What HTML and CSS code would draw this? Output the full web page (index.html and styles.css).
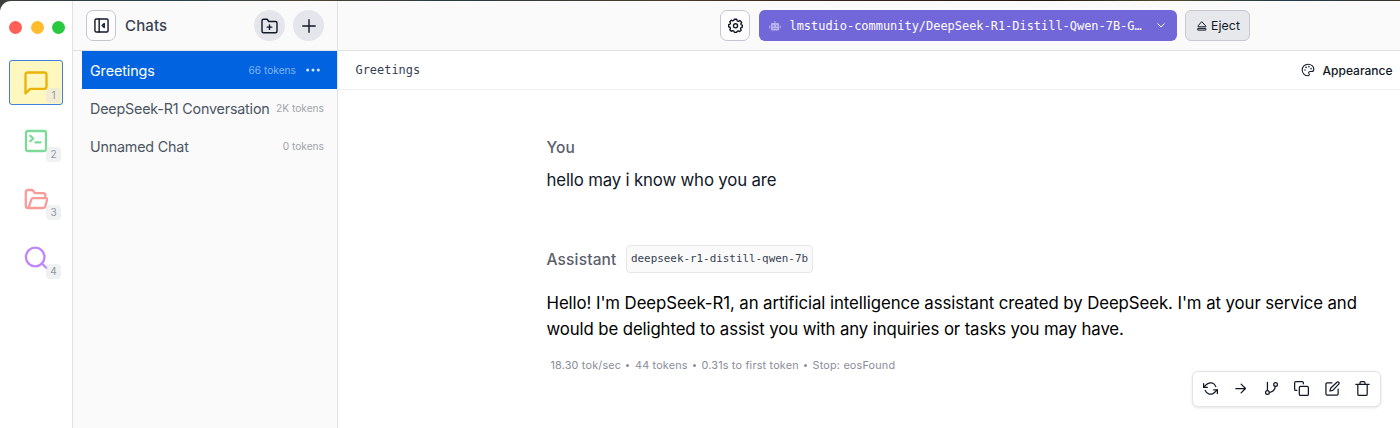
FILE: index.html
```html
<!DOCTYPE html>
<html lang="en">
<head>
  <meta charset="UTF-8">
  <meta name="viewport" content="width=device-width, initial-scale=1.0">
  <title>Chats</title>
  <link rel="stylesheet" href="styles.css">
</head>
<body>
  <div class="window">
    <nav class="rail">
      <div class="lights">
        <span class="light red"></span>
        <span class="light yellow"></span>
        <span class="light green"></span>
      </div>
      <div class="rail-item active">
        <svg class="chat-icon" viewBox="0 0 24 24"><path d="M21 15a2 2 0 0 1-2 2H7l-4 4V5a2 2 0 0 1 2-2h14a2 2 0 0 1 2 2z"/></svg>
        <span class="key">1</span>
      </div>
      <div class="rail-item">
        <svg class="terminal-icon" viewBox="0 0 24 24"><rect x="2" y="2" width="20" height="20" rx="2"/><path d="M6.3 6.8l3 2.7-3 2.7M11.5 13.3h5"/></svg>
        <span class="key">2</span>
      </div>
      <div class="rail-item">
        <svg class="folder-icon" viewBox="0 0 24 24"><path d="M4.5 20H4a2.200 2.200 0 0 1-2.200-2.200V4A2 2 0 0 1 3.800 2h3.700c.7 0 1.200.3 1.600.8L11 5.200h8.300a2 2 0 0 1 2 2v3M4.500 20l3-8.800c.2-.6.700-1 1.300-1h13.200c.8 0 1.300.7 1.100 1.500l-1.900 6.800a2 2 0 0 1-1.900 1.500z"/></svg>
        <span class="key">3</span>
      </div>
      <div class="rail-item">
        <svg class="search-icon" viewBox="0 0 24 24"><circle cx="11.200" cy="11" r="9.300"/><path d="M18 17.500l4.500 4.500"/></svg>
        <span class="key">4</span>
      </div>
    </nav>

    <aside class="sidebar">
      <header class="sidebar-header">
        <button class="icon-btn">
          <svg class="panel-icon" viewBox="0 0 16 16"><rect x="1" y="1" width="14" height="14" rx="1.500"/><path d="M5.500 1v14M10.900 5.800L8.700 8l2.200 2.200z"/></svg>
        </button>
        <h1>Chats</h1>
        <button class="round-btn">
          <svg class="new-folder-icon" viewBox="0 0 24 24"><path d="M22 19a2 2 0 0 1-2 2H4a2 2 0 0 1-2-2V5a2 2 0 0 1 2-2h5l2 3h9a2 2 0 0 1 2 2zM12 10.500v6M9 13.500h6"/></svg>
        </button>
        <button class="round-btn">
          <svg class="plus-icon" viewBox="0 0 14 14"><path d="M7 .8v12.400M.8 7h12.400"/></svg>
        </button>
      </header>
      <div class="chat-list">
        <div class="chat selected">
          <span class="chat-name">Greetings</span>
          <span class="tokens">66 tokens</span>
          <svg class="dots" viewBox="0 0 14 4"><circle cx="1.700" cy="2" r="1.500"/><circle cx="7" cy="2" r="1.500"/><circle cx="12.300" cy="2" r="1.500"/></svg>
        </div>
        <div class="chat">
          <span class="chat-name">DeepSeek-R1 Conversation</span>
          <span class="tokens">2K tokens</span>
        </div>
        <div class="chat">
          <span class="chat-name">Unnamed Chat</span>
          <span class="tokens">0 tokens</span>
        </div>
      </div>
    </aside>

    <main class="main">
      <header class="topbar">
        <button class="icon-btn">
          <svg class="gear-icon" viewBox="0 0 24 24"><path d="M10 2h4l.7 2.700 1.900.8L19 4.100 21.900 7l-1.400 2.400.6 1.600L23 11.500v3l-2.200.8-.8 1.800 1.100 2.300-2.400 2.300-2.300-1.100-1.800.7L13.700 23h-3.400l-.8-2.100-1.900-.7-2.300 1-2.400-2.400L4 16.700l-.8-1.900L1 14v-3.300l2.300-.8.7-1.800L2.900 5.900l2.400-2.400 2.300 1 1.700-.7z"/><circle cx="12" cy="12.500" r="3.300"/></svg>
        </button>
        <button class="model-picker">
          <svg class="robot-icon" viewBox="0 0 12 10"><path d="M5.500 0h1v2H9a1 1 0 0 1 1 1v5.500a1 1 0 0 1-1 1H3a1 1 0 0 1-1-1V3a1 1 0 0 1 1-1h2.500zM.3 4.500h1v3h-1zM10.700 4.500h1v3h-1z"/><path class="robot-face" d="M3.600 4.200h1.300v1.200H3.600zM7.100 4.200h1.300v1.200H7.100zM3.800 7.200h.9v.8h-.9zM5.600 7.200h.9v.8h-.9zM7.300 7.200h.9v.8h-.9z"/></svg>
          <span class="model-name">lmstudio-community/DeepSeek-R1-Distill-Qwen-7B-G…</span>
          <svg class="chevron" viewBox="0 0 8 5"><path d="M.7.7L4 4 7.300.7"/></svg>
        </button>
        <button class="eject-btn">
          <svg class="eject-icon" viewBox="0 0 10 10"><path d="M5 .9l3.800 4.200v.7H1.200v-.7zM1.200 7.400h7.600v1.700H1.200z"/></svg>
          Eject
        </button>
      </header>

      <div class="chat-header">
        <span class="chat-title">Greetings</span>
        <span class="appearance">
          <svg class="palette-icon" viewBox="0 0 24 24"><path d="M12 2a10 10 0 1 0 0 20c1.500 0 2.300-1 2.300-2.200 0-1.400-1.200-1.900-1.200-3.200 0-1.200 1-2.100 2.400-2.100H18c2.500 0 4-1.500 4-4C22 5.700 17.500 2 12 2z"/><circle cx="6.800" cy="12" r=".5"/><circle cx="8.800" cy="7.500" r=".5"/><circle cx="13.500" cy="6.300" r=".5"/><circle cx="17.300" cy="9.700" r=".5"/></svg>
          Appearance
        </span>
      </div>

      <section class="messages">
        <div class="role">You</div>
        <p class="user-text">hello may i know who you are</p>
        <div class="role assistant">Assistant <span class="model-tag">deepseek-r1-distill-qwen-7b</span></div>
        <p class="reply">
          <span class="line">Hello! I'm DeepSeek-R1, an artificial intelligence assistant created by DeepSeek. I'm at your service and</span>
          <span class="line last">would be delighted to assist you with any inquiries or tasks you may have.</span>
        </p>
        <div class="stats">
          <span>18.30 tok/sec</span><i></i><span>44 tokens</span><i></i><span>0.31s to first token</span><i></i><span>Stop: eosFound</span>
        </div>
      </section>

      <div class="actions">
        <svg viewBox="0 0 24 24"><path d="M1 4v6h6M23 20v-6h-6"/><path d="M20.500 9A9 9 0 0 0 5.600 5.600L1 10M23 14l-4.600 4.400A9 9 0 0 1 3.500 15"/></svg>
        <svg viewBox="0 0 24 24"><path d="M4.500 12h15.500M13 5l7 7-7 7"/></svg>
        <svg viewBox="0 0 24 24"><path d="M5.500 2v13M18 8.500a9.500 9.500 0 0 1-9.300 9.500"/><circle cx="18.500" cy="5.500" r="3"/><circle cx="5.500" cy="18.500" r="3"/></svg>
        <svg viewBox="0 0 24 24"><rect x="8.500" y="8.500" width="14.500" height="14.500" rx="2"/><path d="M4.500 15H3a2 2 0 0 1-2-2V3a2 2 0 0 1 2-2h10a2 2 0 0 1 2 2v1.500"/></svg>
        <svg viewBox="0 0 24 24"><path d="M11 3H3.500a2 2 0 0 0-2 2v15.500a2 2 0 0 0 2 2H19a2 2 0 0 0 2-2V13"/><path d="M19 2a2.100 2.100 0 0 1 3 3L12.500 15l-4.500 1 1-4.500z"/></svg>
        <svg viewBox="0 0 24 24"><path d="M1.500 5.500h21M19.500 5.500V21a2 2 0 0 1-2 2h-11a2 2 0 0 1-2-2V5.500M8 5.500V3a2 2 0 0 1 2-2h4a2 2 0 0 1 2 2v2.500"/></svg>
      </div>
    </main>
  </div>
</body>
</html>
```

FILE: styles.css
```css
* {
  box-sizing: border-box;
}

body {
  margin: 0;
  height: 428px;
  padding-top: 1px;
  overflow: hidden;
  background: linear-gradient(90deg, #3b3f3a, #29434e 12%, #4d4632 22%, #283c40 32%, #4b3c2a 48%, #35251d 58%, #24170f 75%, #4e4a2c 83%, #223a4c 92%, #383323);
  font-family: Inter, "Liberation Sans", sans-serif;
  color: #111827;
}

h1, p {
  margin: 0;
}

button {
  padding: 0;
  font-family: inherit;
  color: inherit;
}

svg {
  display: block;
  flex: none;
  fill: none;
  stroke: currentColor;
  stroke-width: 2;
  stroke-linecap: round;
  stroke-linejoin: round;
}

.window {
  display: flex;
  height: 427px;
  background: #fff;
  border-top-left-radius: 11px;
  overflow: hidden;
}

/* Left icon rail */
.rail {
  width: 73px;
  flex: none;
  border-right: 1px solid #e1e2e5;
}

.lights {
  display: flex;
  gap: 8.500px;
  padding: 20px 0 0 9px;
  height: 59px;
}

.light {
  width: 13px;
  height: 13px;
  border-radius: 50%;
}

.red { background: #ff5f57; }
.yellow { background: #febc2e; }
.green { background: #28c840; }

.rail-item {
  position: relative;
  display: flex;
  align-items: center;
  justify-content: center;
  width: 54px;
  height: 45px;
  margin: 0 0 13.500px 9px;
  border: 1px solid transparent;
  border-radius: 3px;
}

.rail-item.active {
  background: #fef7c0;
  border-color: #3d83dc;
}

.rail-item svg {
  width: 24px;
  height: 24px;
  stroke-width: 2.300;
}

.rail-item .chat-icon {
  width: 28px;
  height: 28px;
  stroke-width: 2;
  color: #eab308;
}

.terminal-icon { color: #7ddb98; }
.folder-icon { color: #fb9a9a; }
.search-icon { color: #c084fc; }

.key {
  position: absolute;
  right: 1px;
  bottom: 1px;
  width: 15px;
  height: 15px;
  border-radius: 4px;
  background: rgba(226, 228, 232, 0.5);
  color: #9296a0;
  font-size: 10px;
  line-height: 15px;
  text-align: center;
}

/* Chat list */
.sidebar {
  width: 265px;
  flex: none;
  background: #fafafa;
  border-right: 1px solid #e1e2e5;
}

.sidebar-header {
  display: flex;
  align-items: center;
  height: 50px;
  padding: 0 13px;
  border-bottom: 1px solid #e1e2e5;
}

.sidebar-header h1 {
  flex: 1;
  margin-left: 9px;
  font-size: 15px;
  font-weight: 500;
  letter-spacing: 0.150px;
  color: #374151;
}

.icon-btn {
  display: flex;
  align-items: center;
  justify-content: center;
  width: 30px;
  height: 31px;
  border: 1px solid #c4c6cf;
  border-radius: 7px;
  background: #fdfdfd;
}

.panel-icon {
  width: 15px;
  height: 15px;
  stroke-width: 1.500;
}

.round-btn {
  display: flex;
  align-items: center;
  justify-content: center;
  width: 31px;
  height: 31px;
  margin-left: 8px;
  border: 0;
  border-radius: 50%;
  background: #e5e6eb;
}

.new-folder-icon {
  width: 19px;
  height: 18px;
  stroke-width: 1.900;
}

.plus-icon {
  width: 14px;
  height: 14px;
  stroke-width: 1.400;
}

.chat {
  display: flex;
  align-items: center;
  height: 38px;
  margin-left: 8.500px;
  padding: 0 13px 0 8.500px;
  font-size: 14.300px;
  letter-spacing: -0.180px;
  color: #4b5563;
  white-space: nowrap;
}

.chat.selected {
  padding-right: 17px;
  background: #0263e0;
  color: #fff;
  letter-spacing: -0.080px;
}

.chat-name {
  flex: 1;
}

.tokens {
  font-size: 10.200px;
  letter-spacing: 0;
  color: #a0a3ab;
}

.selected .tokens {
  color: #83b3f2;
}

.dots {
  width: 14px;
  height: 4px;
  margin-left: 10px;
  fill: #d5e5fb;
  stroke: none;
}

/* Main area */
.main {
  position: relative;
  flex: 1;
  min-width: 0;
}

.topbar {
  display: flex;
  align-items: center;
  height: 50px;
  padding-left: 382px;
  background: #fafafa;
  border-bottom: 1px solid #e1e2e5;
}

.gear-icon {
  width: 15px;
  height: 15px;
  stroke-width: 2.200;
}

.model-picker {
  display: flex;
  align-items: center;
  width: 418px;
  height: 31px;
  margin: 0 8px 0 9px;
  padding: 0 12px 0 10px;
  border: 0;
  border-radius: 6px;
  background: #7167d8;
  color: #fff;
}

.robot-icon {
  width: 12px;
  height: 10px;
  fill: #b9b3ec;
  stroke: none;
}

.robot-face {
  fill: #7167d8;
}

.model-name {
  flex: 1;
  margin-left: 8.500px;
  font: 11.940px "DejaVu Sans Mono", monospace;
  text-align: left;
  white-space: nowrap;
}

.chevron {
  width: 8px;
  height: 5px;
  stroke-width: 1;
}

.eject-btn {
  display: flex;
  align-items: center;
  gap: 4px;
  width: 65px;
  height: 31px;
  padding-left: 11px;
  border: 1px solid #c8c9d0;
  border-radius: 6px;
  background: #e7e8ec;
  font-size: 12.300px;
  letter-spacing: 0.100px;
}

.eject-icon {
  width: 10px;
  height: 10px;
  stroke-width: 1;
}

.chat-header {
  display: flex;
  align-items: center;
  justify-content: space-between;
  height: 39px;
  padding: 0 7.500px 0 17.500px;
  border-bottom: 1px solid #eeeff1;
}

.chat-title {
  font: 11.940px "DejaVu Sans Mono", monospace;
  color: #374151;
}

.appearance {
  display: flex;
  align-items: center;
  gap: 8px;
  font-size: 12px;
  font-weight: 500;
}

.palette-icon {
  width: 14px;
  height: 14px;
  stroke-width: 1.800;
}

/* Messages */
.messages {
  padding: 45px 0 0 208.500px;
  white-space: nowrap;
}

.role {
  display: flex;
  align-items: center;
  height: 24px;
  font-size: 15.500px;
  font-weight: 500;
  letter-spacing: 0.150px;
  color: #5c606c;
}

.user-text {
  height: 26px;
  margin-top: 8px;
  font-size: 16.800px;
  letter-spacing: -0.160px;
  line-height: 26px;
}

.assistant {
  height: 28px;
  margin-top: 52px;
}

.model-tag {
  height: 28px;
  margin-left: 9.500px;
  padding: 0 4px;
  border: 1px solid #e6e7e9;
  border-radius: 4px;
  background: #fafafa;
  font: 10.900px/26px "DejaVu Sans Mono", monospace;
  letter-spacing: 0;
  color: #374151;
}

.reply {
  margin-top: 17px;
  color: #000;
  font-size: 16.800px;
  letter-spacing: -0.075px;
  line-height: 26px;
}

.line {
  display: block;
}

.line.last {
  letter-spacing: -0.115px;
}

.stats {
  display: flex;
  align-items: center;
  height: 16px;
  margin: 15px 0 0 4px;
  font-size: 10.800px;
  letter-spacing: 0.200px;
  color: #8a8d99;
}

.stats i {
  width: 3px;
  height: 3px;
  margin: 0 5.500px 0 5.300px;
  border-radius: 50%;
  background: #8a8d99;
}

/* Message actions float over the bottom right */
.actions {
  position: absolute;
  right: 19px;
  bottom: 21px;
  display: flex;
  align-items: center;
  justify-content: space-between;
  width: 189px;
  height: 36px;
  padding: 0 10px 1px;
  border: 1px solid #e2e3e6;
  border-radius: 6px;
  background: #fff;
  box-shadow: 0 1px 3px rgba(0, 0, 0, 0.1);
}

.actions svg {
  width: 15px;
  height: 15px;
}
```
